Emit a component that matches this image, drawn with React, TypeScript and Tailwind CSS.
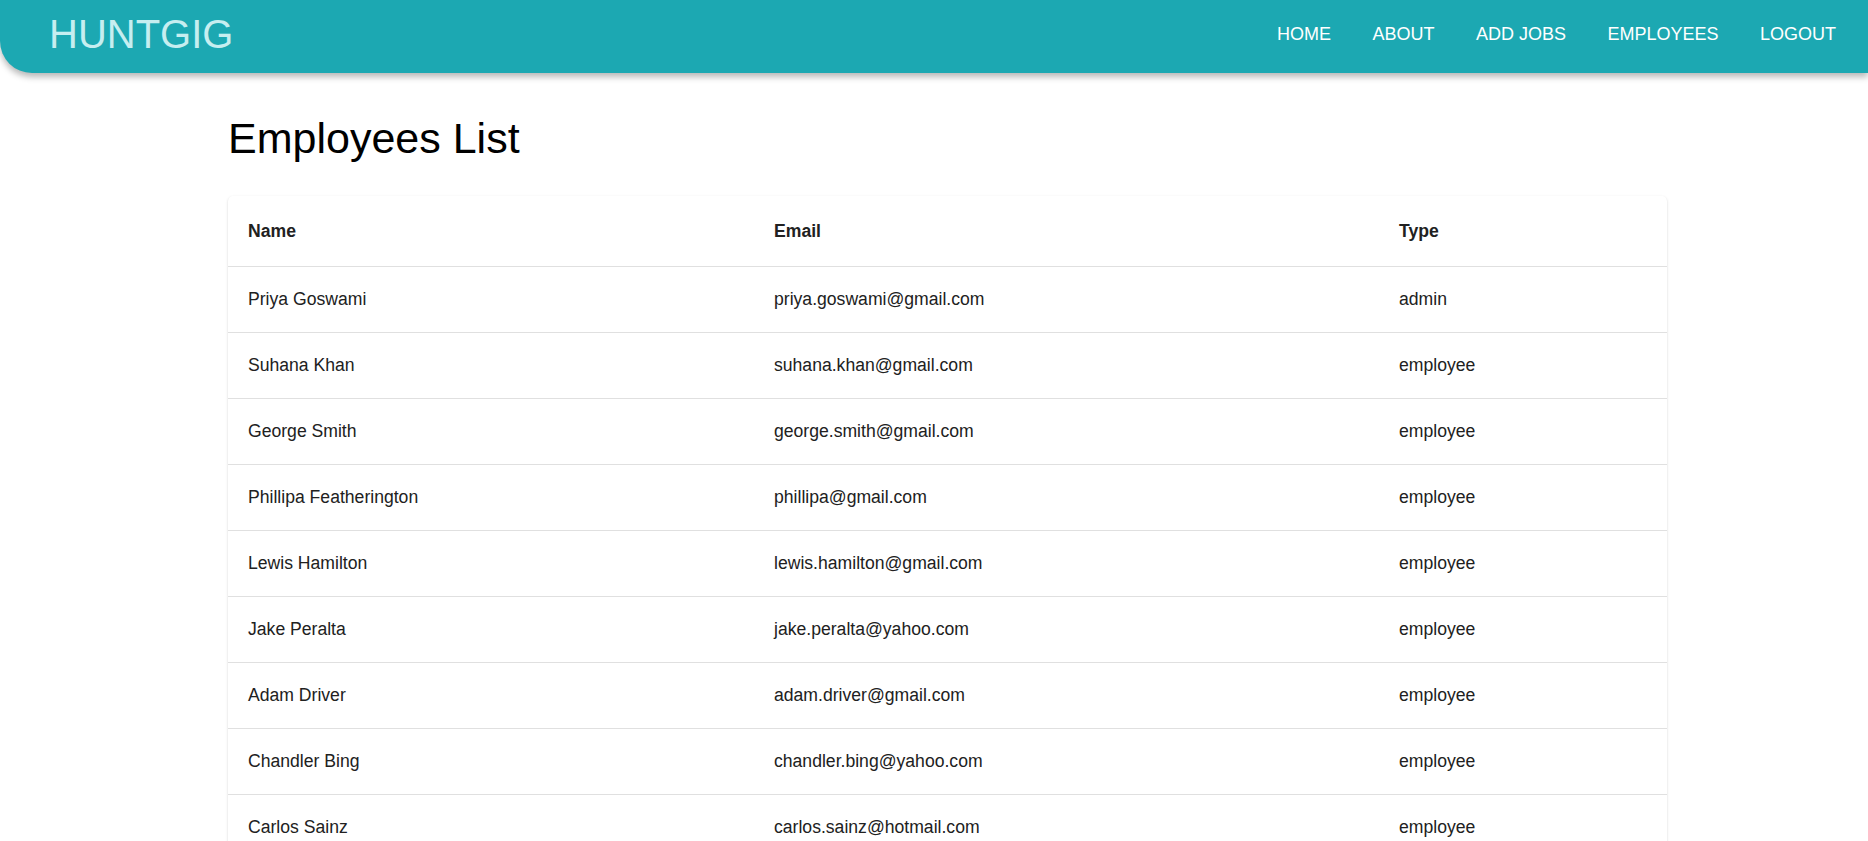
import React from "react";

const rows: [string, string, string][] = [
  ["Priya Goswami", "priya.goswami@gmail.com", "admin"],
  ["Suhana Khan", "suhana.khan@gmail.com", "employee"],
  ["George Smith", "george.smith@gmail.com", "employee"],
  ["Phillipa Featherington", "phillipa@gmail.com", "employee"],
  ["Lewis Hamilton", "lewis.hamilton@gmail.com", "employee"],
  ["Jake Peralta", "jake.peralta@yahoo.com", "employee"],
  ["Adam Driver", "adam.driver@gmail.com", "employee"],
  ["Chandler Bing", "chandler.bing@yahoo.com", "employee"],
  ["Carlos Sainz", "carlos.sainz@hotmail.com", "employee"],
];

const navItems = ["HOME", "ABOUT", "ADD JOBS", "EMPLOYEES", "LOGOUT"];

export default function App() {
  return (
    <div
      className="h-[841px] w-full overflow-hidden bg-white"
      style={{ fontFamily: '"Liberation Sans", Arial, sans-serif' }}
    >
      <header className="relative z-10 flex h-[73px] items-center justify-between rounded-bl-[32px] bg-[#1ca8b2] pb-[5px] pl-[49px] pr-[32px] shadow-[0_4px_6px_rgba(0,0,0,0.28)]">
        <div className="text-[40px] leading-[46px] text-[#c6eef0]">HUNTGIG</div>
        <nav className="flex items-center gap-[41.5px]">
          {navItems.map((n) => (
            <span key={n} className="text-[18px] leading-[22px] text-white">
              {n}
            </span>
          ))}
        </nav>
      </header>

      <main className="pl-[228px]">
        <h1 className="mt-[41px] text-[43px] font-normal leading-[49px] text-black">
          Employees List
        </h1>
        <div className="mt-[33px] w-[1439px] overflow-hidden rounded-[5px] bg-white shadow-[0_2px_1px_-1px_rgba(0,0,0,0.2),0_1px_1px_0_rgba(0,0,0,0.14),0_1px_3px_0_rgba(0,0,0,0.12)]">
          <table className="w-full table-fixed border-collapse text-[17.6px] text-[#212121]">
            <colgroup>
              <col className="w-[526px]" />
              <col className="w-[625px]" />
              <col />
            </colgroup>
            <thead>
              <tr className="border-b border-[#e0e0e0]">
                <th className="p-[20px] text-left font-bold leading-[30px]">Name</th>
                <th className="p-[20px] text-left font-bold leading-[30px]">Email</th>
                <th className="p-[20px] text-left font-bold leading-[30px]">Type</th>
              </tr>
            </thead>
            <tbody>
              {rows.map(([name, email, type]) => (
                <tr key={email} className="border-b border-[#e0e0e0]">
                  <td className="p-[20px] leading-[25px]">{name}</td>
                  <td className="p-[20px] leading-[25px]">{email}</td>
                  <td className="p-[20px] leading-[25px]">{type}</td>
                </tr>
              ))}
            </tbody>
          </table>
        </div>
      </main>
    </div>
  );
}
